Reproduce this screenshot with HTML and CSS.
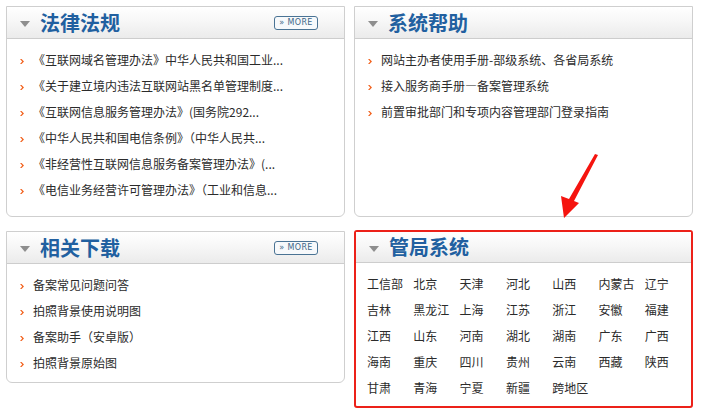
FILE: index.html
```html
<!DOCTYPE html>
<html lang="zh-CN">
  <head>
    <meta charset="UTF-8" />
    <title>ICP备案</title>
    <link rel="stylesheet" href="styles.css">
  </head>
  <body>
    <div class="page">
      <div class="boxes">
        <section class="box boxTall">
          <div class="boxHead">
            <i class="tri"></i>
            <h2>法律法规</h2>
            <a class="more" href="#">&raquo; MORE</a>
          </div>
          <ul class="list">
            <li>《互联网域名管理办法》中华人民共和国工业...</li>
            <li>《关于建立境内违法互联网站黑名单管理制度...</li>
            <li>《互联网信息服务管理办法》(国务院292...</li>
            <li>《中华人民共和国电信条例》（中华人民共...</li>
            <li>《非经营性互联网信息服务备案管理办法》(...</li>
            <li>《电信业务经营许可管理办法》（工业和信息...</li>
          </ul>
        </section>

        <section class="box boxTall">
          <div class="boxHead">
            <i class="tri"></i>
            <h2>系统帮助</h2>
          </div>
          <ul class="list">
            <li>网站主办者使用手册-部级系统、各省局系统</li>
            <li>接入服务商手册—备案管理系统</li>
            <li>前置审批部门和专项内容管理部门登录指南</li>
          </ul>
        </section>

        <section class="box boxDown">
          <div class="boxHead">
            <i class="tri"></i>
            <h2>相关下载</h2>
            <a class="more" href="#">&raquo; MORE</a>
          </div>
          <ul class="list">
            <li>备案常见问题问答</li>
            <li>拍照背景使用说明图</li>
            <li>备案助手（安卓版）</li>
            <li>拍照背景原始图</li>
          </ul>
        </section>

        <section class="box boxRed">
          <div class="boxHead">
            <i class="tri"></i>
            <h2>管局系统</h2>
          </div>
          <div class="regions">
            <a href="#">工信部</a><a href="#">北京</a><a href="#">天津</a><a href="#">河北</a><a href="#">山西</a><a href="#">内蒙古</a><a href="#">辽宁</a>
            <a href="#">吉林</a><a href="#">黑龙江</a><a href="#">上海</a><a href="#">江苏</a><a href="#">浙江</a><a href="#">安徽</a><a href="#">福建</a>
            <a href="#">江西</a><a href="#">山东</a><a href="#">河南</a><a href="#">湖北</a><a href="#">湖南</a><a href="#">广东</a><a href="#">广西</a>
            <a href="#">海南</a><a href="#">重庆</a><a href="#">四川</a><a href="#">贵州</a><a href="#">云南</a><a href="#">西藏</a><a href="#">陕西</a>
            <a href="#">甘肃</a><a href="#">青海</a><a href="#">宁夏</a><a href="#">新疆</a><a href="#">跨地区</a>
          </div>
        </section>
      </div>

      <svg class="arrow" width="701" height="419" viewBox="0 0 701 419">
        <polygon points="595,154 598,155 574,201 579,203 564,218 561,196 569,199" fill="#f5140f" />
      </svg>
    </div>
  </body>
</html>
```

FILE: styles.css
```css
body {
  margin: 0;
  background: #fff;
  font-family: 'Noto Sans CJK SC', 'Noto Sans', sans-serif;
  color: #333;
}

.page {
  position: relative;
  width: 701px;
  height: 419px;
  padding: 6px 0 0 6px;
  box-sizing: border-box;
}

.boxes {
  display: grid;
  grid-template-columns: 339px 339px;
  column-gap: 9px;
  row-gap: 13px;
  align-items: start;
}

.box {
  border: 1px solid #cfcfcf;
  border-radius: 0 0 6px 6px;
  box-sizing: border-box;
  background: #fff;
}

.boxTall {
  height: 211px;
}

.boxDown {
  height: 152px;
  margin-top: 1px;
}

.boxRed {
  height: 178px;
  border: 2px solid #ec2119;
  border-radius: 3px;
}

.boxHead {
  display: flex;
  align-items: center;
  height: 32px;
  padding: 0 26px 0 13px;
  border-bottom: 1px solid #cdcdcd;
  box-sizing: border-box;
  background: linear-gradient(#fff 0, #f7f7f7 45%, #ebebeb 100%);
}

.boxRed .boxHead {
  height: 31px;
}

.tri {
  width: 0;
  height: 0;
  margin: 3px 10px 0 0;
  border-left: 5px solid transparent;
  border-right: 5px solid transparent;
  border-top: 6px solid #8e8e8e;
}

.boxHead h2 {
  flex: 1;
  margin: 0;
  font-size: 20px;
  line-height: 1;
  font-weight: 700;
  color: #2160a0;
}

.more {
  display: block;
  width: 44px;
  height: 14px;
  border: 1px solid #4a7394;
  border-radius: 3px;
  box-sizing: border-box;
  background: #f7f9fb;
  color: #3d6788;
  font-family: 'DejaVu Sans', sans-serif;
  font-size: 8px;
  line-height: 12px;
  letter-spacing: 0.4px;
  text-align: center;
  text-decoration: none;
}

.list {
  margin: 0;
  padding: 8px 0 0 13px;
  list-style: none;
}

.list li {
  font-size: 12px;
  line-height: 26px;
  white-space: nowrap;
  color: #2b2b2b;
}

.list li::before {
  content: '';
  display: inline-block;
  width: 4px;
  height: 5px;
  margin-right: 9px;
  vertical-align: 1px;
  background: #f26522;
  clip-path: polygon(0 0, 40% 0, 100% 50%, 40% 100%, 0 100%, 55% 50%);
}

.regions {
  display: grid;
  grid-template-columns: repeat(7, 46.3px);
  padding: 8px 0 0 11px;
}

.regions a {
  font-size: 12px;
  line-height: 26px;
  color: #2b2b2b;
  text-decoration: none;
  white-space: nowrap;
}

.arrow {
  position: absolute;
  left: 0;
  top: 0;
  pointer-events: none;
}
```
